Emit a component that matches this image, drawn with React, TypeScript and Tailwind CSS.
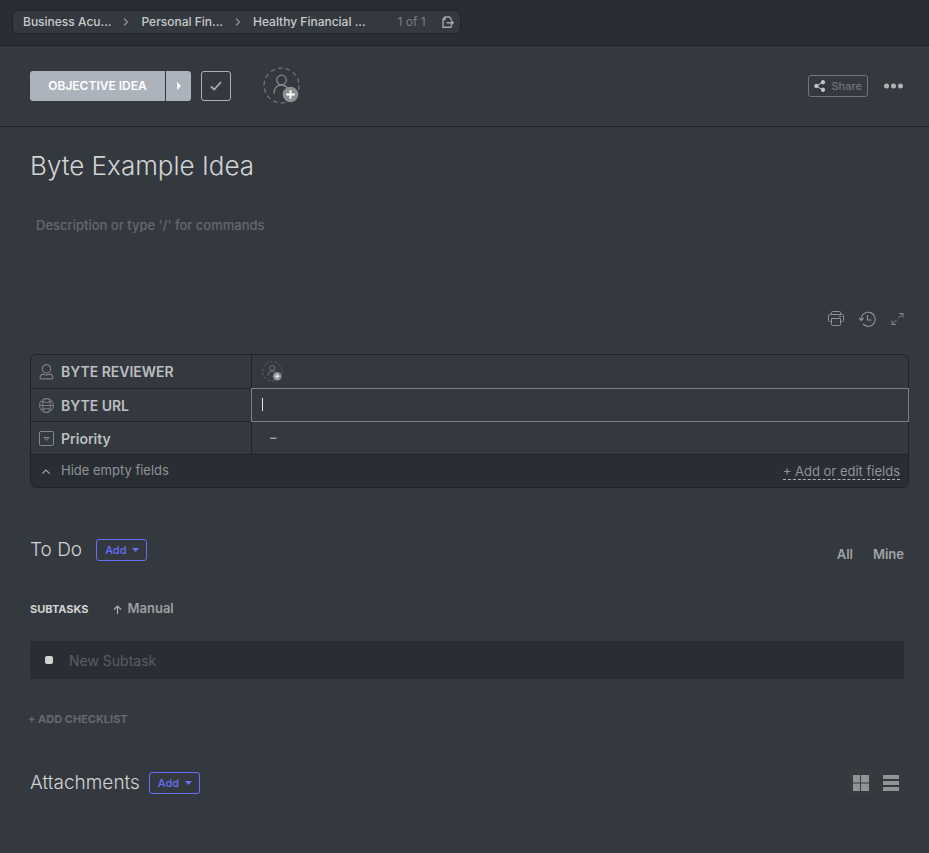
import React from "react";

function Chevron() {
  return (
    <svg width="6" height="10" viewBox="0 0 6 10" fill="none" stroke="#8b8e93" strokeWidth="1.4" aria-hidden="true">
      <path d="M1 1.5 4.5 5 1 8.5" />
    </svg>
  );
}

function AssigneeIcon({ size }: { size: number }) {
  return (
    <svg width={size} height={size} viewBox="0 0 38 38" fill="none" aria-hidden="true">
      <circle cx="18.5" cy="18.5" r="17.5" stroke="#6f7277" strokeWidth="1.3" strokeDasharray="4.5 3.35" />
      <circle cx="18.5" cy="13" r="4.8" stroke="#85888c" strokeWidth="1.3" />
      <path d="M11 26.500c0-5.500 3-8.500 7.500-8.500 2.500 0 4.500 1 6 2.800" stroke="#85888c" strokeWidth="1.300" />
      <circle cx="27.500" cy="27.500" r="7.800" fill="#8f9092" />
      <path d="M27.500 23.200v8.600M23.200 27.500h8.600" stroke="#fff" strokeWidth="1.8" />
    </svg>
  );
}

function AddButton() {
  return (
    <button className="flex h-[22px] items-center gap-1.5 rounded-[3px] border border-[#6670fb] pr-[7px] pl-2 text-[11px] font-medium text-[#6670fb]">
      Add
      <svg width="7" height="4" viewBox="0 0 7 4" fill="#6670fb" aria-hidden="true">
        <path d="M0 0h7L3.500 4z" />
      </svg>
    </button>
  );
}

const crumbs = ["Business Acu...", "Personal Fin...", "Healthy Financial ..."];

function TopBar() {
  return (
    <header className="flex h-[46px] items-start border-b border-[#1f232a] bg-[#292d34] px-3 pt-2.5">
      <nav aria-label="Breadcrumb" className="flex h-6 items-center rounded-md border border-[#1f232a] bg-[#34383f] pr-1.5 pl-2.5 text-[12px] font-medium text-[#c9cacc]">
        {crumbs.map((crumb, i) => (
          <React.Fragment key={crumb}>
            {i > 0 && <span className="flex w-[30px] justify-center"><Chevron /></span>}
            <a href="#" className="whitespace-nowrap">{crumb}</a>
          </React.Fragment>
        ))}
        <span className="ml-8 font-normal whitespace-nowrap text-[#7b7e83]">1 of 1</span>
        <button aria-label="Move task" className="ml-4">
          <svg width="12" height="13" viewBox="0 0 12 13" fill="none" stroke="#a4a6a9" strokeWidth="1.4" aria-hidden="true">
            <path d="M9 4V2.500L7.500 1H3L1 3v8.300h8V9.500M1 3.500h2V1M4.500 6.700H11M9 4.500l2.200 2.200L9 9" />
          </svg>
        </button>
      </nav>
    </header>
  );
}

function Toolbar() {
  return (
    <div className="flex h-[81px] items-center border-b border-[#1f232a] pr-[25px] pl-[30px]">
      <button className="h-[30px] w-[135px] rounded-l-[3px] bg-[#adb3bc] text-[12px] font-semibold text-white">
        OBJECTIVE IDEA
      </button>
      <button aria-label="Next status" className="ml-px flex h-[30px] w-[25px] items-center justify-center rounded-r-[3px] bg-[#adb3bc]">
        <svg width="4" height="8" viewBox="0 0 4 8" fill="#fff" aria-hidden="true"><path d="M0 0 4 4 0 8z" /></svg>
      </button>
      <button aria-label="Mark complete" className="ml-2.5 flex size-[30px] items-center justify-center rounded-[3px] border border-[#b0afb0]">
        <svg width="12" height="10" viewBox="0 0 12 10" fill="none" stroke="#adadaf" strokeWidth="1.8" aria-hidden="true">
          <path d="M1 5.500 4.200 8.500 11 1" />
        </svg>
      </button>
      <button aria-label="Add assignee" className="ml-8"><AssigneeIcon size={38} /></button>
      <button className="ml-auto flex h-[22px] items-center gap-1.5 rounded-[3px] border border-[#70747e] px-[5px] text-[11px] font-medium text-[#70747d]">
        <svg width="12" height="12" viewBox="0 0 12 12" fill="#c3c5c9" stroke="#c3c5c9" aria-hidden="true">
          <path d="M9 2 2.500 6 9 10" fill="none" strokeWidth="1" />
          <circle cx="9" cy="2.200" r="1.700" /><circle cx="2.400" cy="6" r="1.700" /><circle cx="9" cy="9.800" r="1.700" />
        </svg>
        Share
      </button>
      <button aria-label="More" className="ml-4">
        <svg width="20" height="6" viewBox="0 0 20 6" fill="#b2b3b5" aria-hidden="true">
          <circle cx="2.500" cy="3" r="2.500" /><circle cx="9.500" cy="3" r="2.500" /><circle cx="16.500" cy="3" r="2.500" />
        </svg>
      </button>
    </div>
  );
}

function ViewTools() {
  return (
    <div className="mt-[76px] flex h-4 items-center justify-end gap-[15px]">
      <button aria-label="Print">
        <svg width="16" height="16" viewBox="0 0 16 16" fill="none" stroke="#8d9092" aria-hidden="true">
          <path d="M3.500 3.500V1.500q0-1 1-1h7q1 0 1 1v2M3.500 10.500h-2q-1 0-1-1v-5q0-1 1-1h13q1 0 1 1v5q0 1-1 1h-2M3.500 7.500h9v6q0 1-1 1h-7q-1 0-1-1zM11 5.500h2.500" />
        </svg>
      </button>
      <button aria-label="History">
        <svg width="17" height="16" viewBox="0 0 17 16" fill="none" stroke="#8d9092" strokeWidth="1.200" aria-hidden="true">
          <path d="M2.200 9A7 7 0 1 1 4 13M0 7l2.200 2.500L4.500 7M8.500 4v5h4" />
        </svg>
      </button>
      <button aria-label="Expand">
        <svg width="13" height="12" viewBox="0 0 13 12" fill="none" stroke="#85888b" aria-hidden="true">
          <path d="M8 .5h4v4M12 .5 7.500 5M5.500 7 1 11.500M1 7.500v4h4" />
        </svg>
      </button>
    </div>
  );
}

const th = "border-r border-[#1f232a] pl-2 text-left text-[14px] font-semibold text-[#bcbec0]";

function Fields() {
  return (
    <section className="mt-[27px] mr-[-5px] rounded-md border border-[#1f232a] text-[13px]">
      <table className="w-full table-fixed border-separate border-spacing-0">
        <tbody>
          <tr className="h-[33px]">
            <th scope="row" className={`${th} w-[221px]`}>
              <span className="flex items-center gap-[7px]">
                <svg width="15" height="16" viewBox="0 0 15 16" fill="none" stroke="#7d8083" strokeWidth="1.200" aria-hidden="true">
                  <circle cx="7.500" cy="4.800" r="4.200" />
                  <path d="M4 10.200q-2.500.3-2.900 3.300-.1 1.300 1.100 1.300h10.600q1.200 0 1.100-1.300-.4-3-2.900-3.300-3.500 1.500-7 0z" />
                </svg>
                BYTE REVIEWER
              </span>
            </th>
            <td className="pl-2.5">
              <button aria-label="Add reviewer" className="block"><AssigneeIcon size={21} /></button>
            </td>
          </tr>
          <tr className="h-[33px]">
            <th scope="row" className={`${th} border-t`}>
              <label htmlFor="byte-url" className="flex items-center gap-[7px]">
                <svg width="15" height="15" viewBox="0 0 15 15" fill="none" stroke="#7d8083" aria-hidden="true">
                  <circle cx="7.500" cy="7.500" r="7" /><ellipse cx="7.500" cy="7.500" rx="3.800" ry="7" />
                  <path d="M2 3.500q5.500 2 11 0M2 11.500q5.500-2 11 0M.5 7.500h14" />
                </svg>
                BYTE URL
              </label>
            </th>
            <td className="p-0">
              <div className="relative -mr-px -mb-px -ml-px">
                <input id="byte-url" type="text" className="block h-[34px] w-full border border-[#7a7e87] bg-transparent px-2.5 text-[#d5d6d8] outline-none" />
                <span className="absolute top-2.5 left-[11px] h-[13px] w-px bg-[#e4e5e6]" />
              </div>
            </td>
          </tr>
          <tr className="h-[33px]">
            <th scope="row" className={`${th} border-t`}>
              <span className="flex items-center gap-[7px]">
                <svg width="15" height="15" viewBox="0 0 15 15" fill="none" stroke="#85888b" aria-hidden="true">
                  <rect x=".5" y=".5" width="14" height="14" rx="1" /><path d="M5 6.500h5L7.500 9.500z" />
                </svg>
                Priority
              </span>
            </th>
            <td className="pl-[18px] font-semibold text-[#a3a5a8]">–</td>
          </tr>
        </tbody>
      </table>
      <div className="flex h-[33px] items-center justify-between rounded-b-[5px] border-t border-[#1f232a] bg-[#292d34] pr-2 pl-[11px] text-[#919397]">
        <button className="flex items-center gap-[11px]">
          <svg width="8" height="5" viewBox="0 0 8 5" fill="none" stroke="#a1a3a6" strokeWidth="1.200" aria-hidden="true"><path d="M.5 4.500 4 1l3.500 3.500" /></svg>
          Hide empty fields
        </button>
        <button className="border-b border-dashed border-[#aeb0b3] leading-4">+ Add or edit fields</button>
      </div>
    </section>
  );
}

export default function App() {
  return (
    <div className="min-h-screen bg-[#34383f] font-['Inter','Liberation_Sans',sans-serif]">
      <TopBar />
      <Toolbar />
      <main className="pr-[25px] pb-14 pl-[30px]">
        <h1 className="pt-[21px] text-[26px] leading-9 font-light text-[#d2d3d4]">Byte Example Idea</h1>
        <textarea
          aria-label="Description"
          rows={1}
          placeholder="Description or type '/' for commands"
          className="mt-[31px] block h-5 w-full resize-none overflow-hidden px-1.5 text-[13px] leading-5 font-medium outline-none placeholder:text-[#66696e]"
        />
        <ViewTools />
        <Fields />

        <section className="mt-[50px]">
          <div className="flex h-6 items-center">
            <h2 className="text-[19px] leading-6 font-light text-[#d2d3d4]">To Do</h2>
            <div className="ml-3.5"><AddButton /></div>
            <div className="ml-auto flex gap-5 pt-2.5 text-[13px] font-semibold text-[#a1a3a5]">
              <button>All</button>
              <button>Mine</button>
            </div>
          </div>
          <div className="mt-[37px] flex h-5 items-center">
            <h3 className="text-[11px] font-bold text-[#d3d4d5]">SUBTASKS</h3>
            <button className="ml-6 flex items-center gap-1.5 text-[13px] font-semibold text-[#9d9fa2]">
              <svg width="9" height="9" viewBox="0 0 9 9" fill="none" stroke="#b0b2b4" strokeWidth="1.200" aria-hidden="true"><path d="M4.500 9V1M1 4.500 4.500 1 8 4.500" /></svg>
              Manual
            </button>
          </div>
          <div className="mt-[22px] flex h-[38px] items-center bg-[#292d34] pl-[15px]">
            <span className="size-2 rounded-[2px] bg-[#d2d2d3]" />
            <input aria-label="New Subtask" placeholder="New Subtask" className="ml-4 min-w-0 flex-1 text-[14px] outline-none placeholder:text-[#5b5e63]" />
          </div>
          <button className="-ml-0.5 mt-[30px] block text-[11px] leading-5 font-bold text-[#66696e]">+ ADD CHECKLIST</button>
        </section>

        <section className="mt-[41px] flex h-[26px] items-center">
          <h2 className="text-[19px] leading-6 font-light text-[#d2d3d4]">Attachments</h2>
          <div className="ml-[9px]"><AddButton /></div>
          <button aria-label="Grid view" className="ml-auto flex size-[26px] items-center justify-center rounded-[2px] bg-[#373a3f]">
            <svg width="16" height="16" viewBox="0 0 16 16" fill="#919495" aria-hidden="true">
              <path d="M0 0h7v7.500H0zM8 0h8v7.500H8zM0 8.500h7V16H0zM8 8.500h8V16H8z" />
            </svg>
          </button>
          <button aria-label="List view" className="mr-[5px] ml-[9px]">
            <svg width="16" height="16" viewBox="0 0 16 16" fill="#919495" aria-hidden="true">
              <path d="M0 0h16v4H0zM0 6h16v4H0zM0 12h16v4H0z" />
            </svg>
          </button>
        </section>
      </main>
    </div>
  );
}
